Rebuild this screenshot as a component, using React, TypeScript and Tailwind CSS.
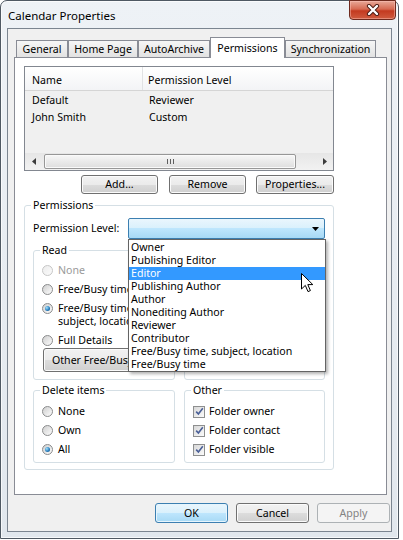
import React from "react";

function Radio({ checked = false, disabled = false }: { checked?: boolean; disabled?: boolean }) {
  return (
    <span
      className={
        disabled
          ? "w-[11px] h-[11px] rounded-full border border-[#c6c6c6] bg-linear-to-br from-[#ececec] to-[#fbfbfb] flex items-center justify-center shrink-0"
          : "w-[11px] h-[11px] rounded-full border border-[#8a8b8c] bg-linear-to-br from-[#cfcfcf] to-[#fdfdfd] flex items-center justify-center shrink-0"
      }
    >
      {checked && (
        <span className="w-[5px] h-[5px] rounded-full bg-[radial-gradient(circle_at_35%_35%,#a6e4fc,#2a7fc0_55%,#0b4a7c)]" />
      )}
    </span>
  );
}

function Check() {
  return (
    <span className="w-[12px] h-[12px] border border-[#8e8f8f] bg-linear-to-br from-[#d8d8d8] to-[#fbfbfb] flex items-center justify-center shrink-0">
      <svg width="9" height="9" viewBox="0 0 9 9">
        <path d="M1.2 4.6 L3.4 7 L7.8 1.3" fill="none" stroke="#4a5f97" strokeWidth="1.6" />
      </svg>
    </span>
  );
}

function Btn({ children, w, h = "h-[19px]" }: { children: React.ReactNode; w: string; h?: string }) {
  return (
    <div
      className={`${w} ${h} flex items-center justify-center rounded-[3px] border border-[#707070] bg-[linear-gradient(#f2f2f2,#ebebeb_50%,#dddddd_50%,#cfcfcf)] shadow-[inset_0_0_0_1px_#fbfbfb] shrink-0`}
    >
      {children}
    </div>
  );
}

const dropItems = [
  "Owner",
  "Publishing Editor",
  "Editor",
  "Publishing Author",
  "Author",
  "Nonediting Author",
  "Reviewer",
  "Contributor",
  "Free/Busy time, subject, location",
  "Free/Busy time",
];

export default function App() {
  return (
    <div className="w-[403px] h-[540px] bg-white font-['Noto_Sans',sans-serif] text-[10.6px] leading-[13px] text-black overflow-hidden">
      <div className="relative w-[399px] h-[539px] rounded-t-[7px] border border-[#4f5963] bg-linear-to-b from-[#eef2f6] to-[#e1e7ed] shadow-[inset_0_0_0_1px_rgba(255,255,255,0.7)] flex flex-col px-[6px] pb-[6px]">
        {/* Title bar */}
        <div className="h-[27px] flex items-center pl-[1px] pt-[1px] text-[11.5px] text-black">Calendar Properties</div>

        {/* Close button */}
        <div className="absolute top-[-1px] right-[2px] w-[47px] h-[20px] rounded-b-[4px] border border-[#6e2a1e] bg-[linear-gradient(#e8a898,#d66a52_45%,#c33a20_55%,#cf5b3f)] shadow-[inset_0_0_0_1px_rgba(255,200,190,0.45)] flex items-center justify-center">
          <svg width="14" height="12" viewBox="0 0 14 12">
            <path d="M3 2 L11 10 M11 2 L3 10" stroke="#4a1a12" strokeWidth="4.2" strokeLinecap="round" />
            <path d="M3 2 L11 10 M11 2 L3 10" stroke="#ffffff" strokeWidth="2.4" strokeLinecap="round" />
          </svg>
        </div>

        {/* Client area */}
        <div className="flex-1 border border-[#7b8590] bg-[#f0f0f0] flex flex-col pt-[8px] pl-[6px] pr-[1px]">
          {/* Tabs */}
          <div className="flex items-end ml-[2px]">
            <div className="w-[52px] h-[17px] border border-b-0 border-[#898c95] bg-linear-to-b from-[#f6f6f6] to-[#e2e2e2] flex items-center justify-center">General</div>
            <div className="w-[70px] h-[17px] border border-b-0 border-[#898c95] bg-linear-to-b from-[#f6f6f6] to-[#e2e2e2] flex items-center justify-center">Home Page</div>
            <div className="w-[72px] h-[17px] border border-b-0 border-[#898c95] bg-linear-to-b from-[#f6f6f6] to-[#e2e2e2] flex items-center justify-center">AutoArchive</div>
            <div className="relative z-10 w-[75px] h-[21px] -mb-px border border-b-0 border-[#898c95] bg-white flex items-center justify-center">Permissions</div>
            <div className="w-[91px] h-[17px] border border-b-0 border-[#898c95] bg-linear-to-b from-[#f6f6f6] to-[#e2e2e2] flex items-center justify-center">Synchronization</div>
          </div>

          {/* Tab panel */}
          <div className="w-[373px] h-[438px] border border-[#898c95] bg-white pl-[9px] pt-[8px] flex flex-col">
            {/* List view */}
            <div className="w-[310px] h-[105px] border border-[#828790] bg-[#f0f0f0] flex flex-col">
              <div className="h-[24px] flex border-b border-[#d5d5d5] bg-linear-to-b from-white to-[#f3f4f6]">
                <div className="w-[118px] border-r border-[#e1e2e4] flex items-center pl-[7px] pt-[3px]">Name</div>
                <div className="flex-1 flex items-center pl-[5px] pt-[3px]">Permission Level</div>
              </div>
              <div className="pt-[1px]">
                <div className="h-[17px] flex items-center">
                  <div className="w-[124px] pl-[7px]">Default</div>
                  <div>Reviewer</div>
                </div>
                <div className="h-[17px] flex items-center">
                  <div className="w-[124px] pl-[7px]">John Smith</div>
                  <div>Custom</div>
                </div>
              </div>
              <div className="flex-1" />
              {/* Horizontal scrollbar */}
              <div className="h-[17px] flex items-center bg-linear-to-b from-[#e6e6e6] to-[#f2f2f2]">
                <div className="w-[17px] h-full flex items-center justify-center">
                  <svg width="4" height="7" viewBox="0 0 4 7"><path d="M4 0 L0 3.5 L4 7 Z" fill="#3c3c3c" /></svg>
                </div>
                <div className="ml-[2px] w-[252px] h-[15px] rounded-[2px] border border-[#979797] bg-linear-to-b from-[#f7f7f7] to-[#dedede] shadow-[inset_0_0_0_1px_#fafafa] flex items-center justify-center gap-[2px]">
                  <span className="w-px h-[5px] bg-[#5e5e5e]" />
                  <span className="w-px h-[5px] bg-[#5e5e5e]" />
                  <span className="w-px h-[5px] bg-[#5e5e5e]" />
                </div>
                <div className="flex-1" />
                <div className="w-[17px] h-full flex items-center justify-center">
                  <svg width="4" height="7" viewBox="0 0 4 7"><path d="M0 0 L4 3.5 L0 7 Z" fill="#3c3c3c" /></svg>
                </div>
              </div>
            </div>

            {/* Add / Remove / Properties */}
            <div className="w-[310px] mt-[4px] flex justify-end">
              <Btn w="w-[77px]">Add...</Btn>
              <div className="w-[11px]" />
              <Btn w="w-[77px]">Remove</Btn>
              <div className="w-[10px]" />
              <Btn w="w-[78px]">Properties...</Btn>
            </div>

            {/* Permissions group */}
            <fieldset className="w-[310px] mt-[5px] border border-[#d5dfe5] rounded-[3px] px-[8px] pb-[6px]">
              <legend className="-ml-[2px] px-[2px]">Permissions</legend>
              <div className="mt-[6px] flex items-center justify-between">
                <span>Permission Level:</span>
                <div className="relative">
                  <div className="w-[197px] h-[21px] rounded-[2px] border border-[#3c7fb1] bg-[linear-gradient(#eaf6fd,#d9f0fc_50%,#bee6fd_50%,#a7d9f5)] flex items-center justify-end pr-[5px]">
                    <svg width="7" height="4" viewBox="0 0 7 4"><path d="M0 0 L7 0 L3.5 4 Z" fill="#000" /></svg>
                  </div>
                  {/* Dropdown list */}
                  <div className="absolute left-0 top-full z-20 w-[198px] border border-[#646464] bg-white pt-[1px] shadow-[2px_2px_3px_rgba(0,0,0,0.3)]">
                    {dropItems.map((t) => (
                      <div
                        key={t}
                        className={
                          t === "Editor"
                            ? "h-[13px] pl-[2px] bg-[#3399ff] text-white whitespace-nowrap"
                            : "h-[13px] pl-[2px] whitespace-nowrap"
                        }
                      >
                        {t}
                      </div>
                    ))}
                    {/* Mouse cursor */}
                    <svg className="absolute left-[172px] top-[33px]" width="13" height="20" viewBox="0 0 13 20">
                      <path d="M0.5 0.5 L0.5 16 L4.3 12.4 L7 18.6 L9.4 17.6 L6.8 11.6 L11.8 11.6 Z" fill="#fff" stroke="#000" strokeWidth="1" strokeLinejoin="miter" />
                    </svg>
                  </div>
                </div>
              </div>

              {/* Read / Write */}
              <div className="mt-[5px] flex gap-[9px]">
                <fieldset className="w-[142px] border border-[#d5dfe5] rounded-[3px] px-[8px] pb-[7px]">
                  <legend className="-ml-[2px] px-[2px]">Read</legend>
                  <div className="pt-[7px] flex flex-col gap-[6px]">
                    <div className="flex items-center gap-[5px] text-[#9a9a9a]"><Radio disabled /><span>None</span></div>
                    <div className="flex items-center gap-[5px] whitespace-nowrap"><Radio /><span>Free/Busy time</span></div>
                    <div className="flex items-start gap-[5px]">
                      <span className="mt-[1px]"><Radio checked /></span>
                      <span className="w-[100px]">Free/Busy time, subject, location</span>
                    </div>
                    <div className="flex items-center gap-[5px]"><Radio /><span>Full Details</span></div>
                  </div>
                  <div className="mt-[1px] ml-[1px] w-[122px] h-[24px] rounded-[3px] border border-[#707070] bg-[linear-gradient(#f2f2f2,#ebebeb_50%,#dddddd_50%,#cfcfcf)] shadow-[inset_0_0_0_1px_#fbfbfb] flex items-center pl-[8px] whitespace-nowrap">
                    Other Free/Busy...
                  </div>
                </fieldset>
                {/* Write group: its contents lie fully under the open list */}
                <div className="w-[141px] mt-[7px] border border-[#d5dfe5] rounded-[3px]" />
              </div>

              {/* Delete items / Other */}
              <div className="mt-[4px] flex gap-[9px]">
                <fieldset className="w-[142px] border border-[#d5dfe5] rounded-[3px] px-[8px] pb-[6px]">
                  <legend className="-ml-[2px] px-[2px]">Delete items</legend>
                  <div className="pt-[8px] flex flex-col gap-[6px]">
                    <div className="flex items-center gap-[5px]"><Radio /><span>None</span></div>
                    <div className="flex items-center gap-[5px]"><Radio /><span>Own</span></div>
                    <div className="flex items-center gap-[5px]"><Radio checked /><span>All</span></div>
                  </div>
                </fieldset>
                <fieldset className="w-[141px] border border-[#d5dfe5] rounded-[3px] px-[8px] pb-[6px]">
                  <legend className="-ml-[2px] px-[2px]">Other</legend>
                  <div className="pt-[8px] flex flex-col gap-[6px]">
                    <div className="flex items-center gap-[4px]"><Check /><span>Folder owner</span></div>
                    <div className="flex items-center gap-[4px]"><Check /><span>Folder contact</span></div>
                    <div className="flex items-center gap-[4px]"><Check /><span>Folder visible</span></div>
                  </div>
                </fieldset>
              </div>
            </fieldset>
          </div>

          {/* OK / Cancel / Apply */}
          <div className="mt-[8px] flex justify-end gap-[8px]">
            <div className="w-[73px] h-[20px] rounded-[3px] border border-[#3c7fb1] bg-[linear-gradient(#eaf6fd,#d9f0fc_50%,#bee6fd_50%,#a7d9f5)] shadow-[inset_0_0_0_1px_#e6f5fd] flex items-center justify-center">OK</div>
            <Btn w="w-[73px]" h="h-[20px]">Cancel</Btn>
            <div className="w-[73px] h-[20px] rounded-[3px] border border-[#adb2b5] bg-[#f4f4f4] text-[#838383] flex items-center justify-center">Apply</div>
          </div>
        </div>
      </div>
    </div>
  );
}
